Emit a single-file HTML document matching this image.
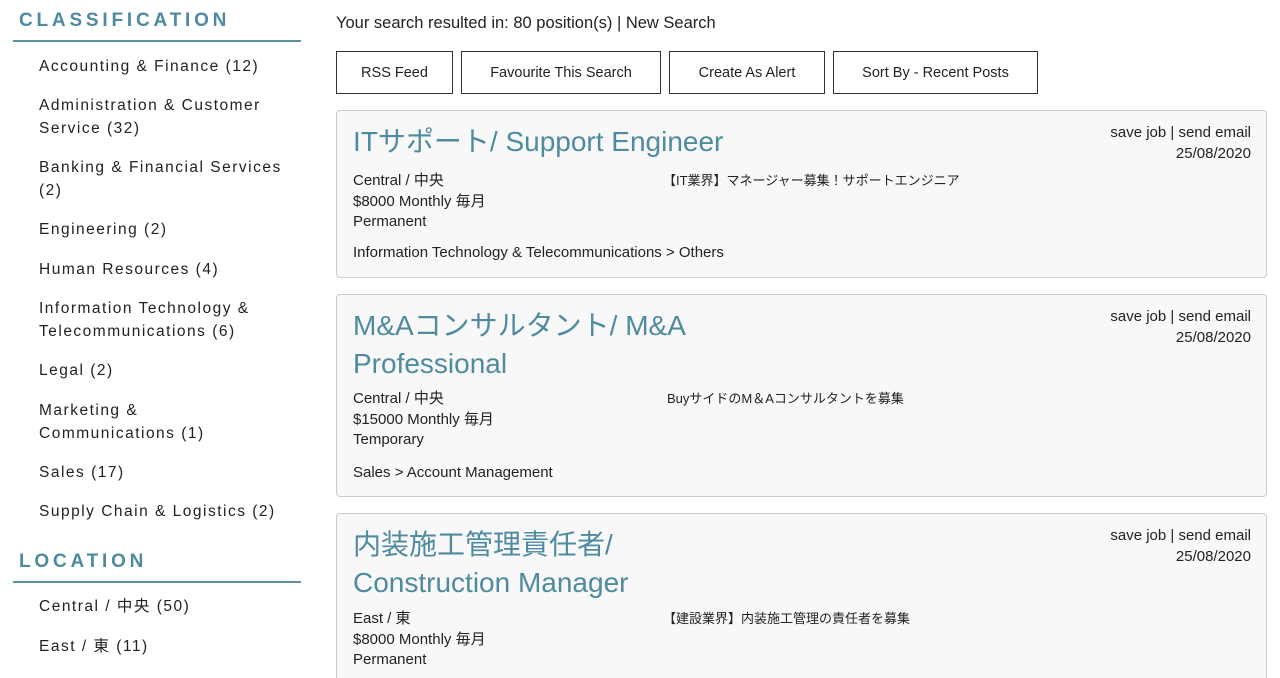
<!DOCTYPE html>
<html><head><meta charset="utf-8"><style>
html,body{margin:0;width:1280px;height:678px;overflow:hidden}
body{background:#fff;font-family:"Liberation Sans","Noto Sans CJK JP",sans-serif;color:#222;position:relative}
.a{position:absolute;white-space:nowrap}
.h{font-size:19px;font-weight:bold;letter-spacing:3.8px;color:#4e8aa0;left:19px}
.ln{position:absolute;left:13px;width:288px;height:2px;background:#5e8fa3}
.s{left:39px;font-size:15.5px;letter-spacing:1.5px;color:#222;line-height:23px}
.btn{position:absolute;top:51px;height:41px;border:1px solid #333;font-size:14.5px;display:flex;align-items:center;justify-content:center;color:#222}
.card{position:absolute;left:336px;width:929px;background:#f8f8f8;border:1px solid #ccc;border-radius:4px}
.t{font-size:28px;color:#4e8aa0;line-height:38px}
.m{font-size:15px;line-height:20.5px}
.j{font-size:13px}
</style></head><body>
<div class="a h" style="top:10px">CLASSIFICATION</div>
<div class="ln" style="top:40px"></div>
<div class="a s" style="top:55px">Accounting &amp; Finance (12)</div>
<div class="a s" style="top:94px">Administration &amp; Customer<br>Service (32)</div>
<div class="a s" style="top:156px">Banking &amp; Financial Services<br>(2)</div>
<div class="a s" style="top:218px">Engineering (2)</div>
<div class="a s" style="top:258px">Human Resources (4)</div>
<div class="a s" style="top:297px">Information Technology &amp;<br>Telecommunications (6)</div>
<div class="a s" style="top:359px">Legal (2)</div>
<div class="a s" style="top:399px">Marketing &amp;<br>Communications (1)</div>
<div class="a s" style="top:461px">Sales (17)</div>
<div class="a s" style="top:500px">Supply Chain &amp; Logistics (2)</div>
<div class="a h" style="top:551px">LOCATION</div>
<div class="ln" style="top:581px"></div>
<div class="a s" style="top:595px">Central / 中央 (50)</div>
<div class="a s" style="top:635px">East / 東 (11)</div>

<div class="a" style="left:336px;top:14px;font-size:16.5px">Your search resulted in: 80 position(s) | New Search</div>
<div class="btn" style="left:336px;width:115px">RSS Feed</div>
<div class="btn" style="left:461px;width:198px">Favourite This Search</div>
<div class="btn" style="left:669px;width:154px">Create As Alert</div>
<div class="btn" style="left:833px;width:203px">Sort By - Recent Posts</div>

<div class="card" style="top:110px;height:166px">
<div class="a t" style="left:16px;top:12px">ITサポート/ Support Engineer</div>
<div class="a m" style="right:15px;top:12px;text-align:right">save job | send email<br>25/08/2020</div>
<div class="a m" style="left:16px;top:60px">Central / 中央<br>$8000 Monthly 毎月<br>Permanent</div>
<div class="a m j" style="left:326px;top:60px">【IT業界】マネージャー募集！サポートエンジニア</div>
<div class="a m" style="left:16px;top:132px">Information Technology &amp; Telecommunications &gt; Others</div>
</div>

<div class="card" style="top:294px;height:201px">
<div class="a t" style="left:16px;top:12px">M&amp;Aコンサルタント/ M&amp;A<br>Professional</div>
<div class="a m" style="right:15px;top:12px;text-align:right">save job | send email<br>25/08/2020</div>
<div class="a m" style="left:16px;top:94px">Central / 中央<br>$15000 Monthly 毎月<br>Temporary</div>
<div class="a m j" style="left:330px;top:94px">BuyサイドのM＆Aコンサルタントを募集</div>
<div class="a m" style="left:16px;top:168px">Sales &gt; Account Management</div>
</div>

<div class="card" style="top:513px;height:180px">
<div class="a t" style="left:16px;top:12px">内装施工管理責任者/<br>Construction Manager</div>
<div class="a m" style="right:15px;top:12px;text-align:right">save job | send email<br>25/08/2020</div>
<div class="a m" style="left:16px;top:95px">East / 東<br>$8000 Monthly 毎月<br>Permanent</div>
<div class="a m j" style="left:326px;top:95px">【建設業界】内装施工管理の責任者を募集</div>
</div>
</body></html>
